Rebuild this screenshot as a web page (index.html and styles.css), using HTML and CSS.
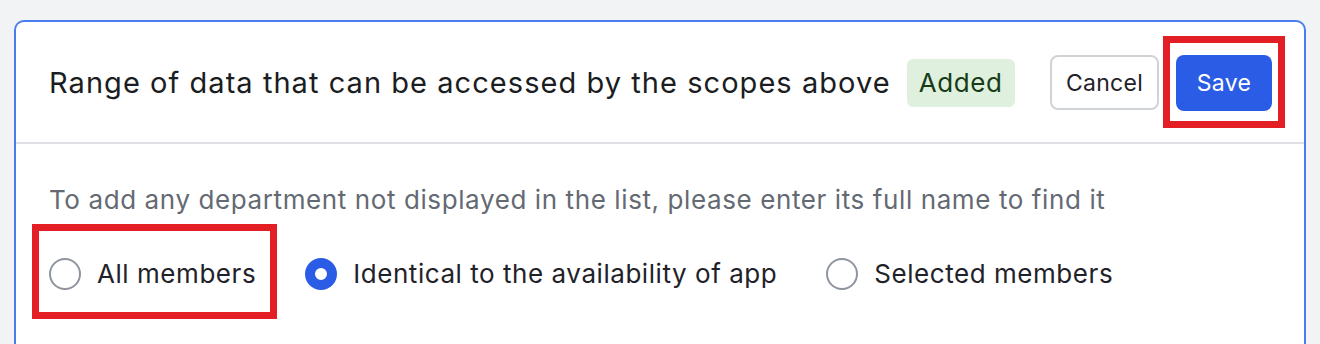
FILE: index.html
```html
<!DOCTYPE html>
<html lang="en">
<head>
<meta charset="utf-8">
<title>Data range</title>
<link rel="stylesheet" href="styles.css">
</head>
<body>
<div class="card">
  <div class="card-header">
    <div class="title-group">
      <h2 class="title">Range of data that can be accessed by the scopes above</h2>
      <span class="badge">Added</span>
    </div>
    <div class="actions">
      <button class="btn btn-default">Cancel</button>
      <button class="btn btn-primary">Save<span class="highlight highlight-save"></span></button>
    </div>
  </div>
  <div class="card-body">
    <p class="hint">To add any department not displayed in the list, please enter its full name to find it</p>
    <div class="radio-group">
      <label class="radio">
        <span class="radio-dot"></span>
        <span class="radio-label">All members</span>
        <span class="highlight highlight-all"></span>
      </label>
      <label class="radio checked">
        <span class="radio-dot"></span>
        <span class="radio-label">Identical to the availability of app</span>
      </label>
      <label class="radio">
        <span class="radio-dot"></span>
        <span class="radio-label">Selected members</span>
      </label>
    </div>
  </div>
</div>
</body>
</html>
```
FILE: styles.css
```css
* { box-sizing: border-box; }
html, body { margin: 0; padding: 0; }
body {
  background: #f2f3f5;
  font-family: Inter, "Noto Sans", sans-serif;
  color: #1f2329;
  width: 1320px;
  height: 344px;
  overflow: hidden;
}
.card {
  margin: 20px 0 0 14px;
  width: 1292px;
  height: 340px;
  background: #fff;
  border: 2px solid #4a7bf0;
  border-bottom: none;
  border-radius: 10px 10px 0 0;
}
.card-header {
  height: 122px;
  display: flex;
  align-items: center;
  justify-content: space-between;
  padding: 1px 32px 0 33px;
  border-bottom: 2px solid #dee0e3;
}
.title-group {
  display: flex;
  align-items: center;
  gap: 16px;
}
.title {
  margin: 0;
  font-size: 29px;
  font-weight: 400;
  color: #1a1d22;
  letter-spacing: 1.05px;
}
.badge {
  display: inline-flex;
  align-items: center;
  justify-content: center;
  width: 108px;
  height: 48px;
  background: #dff1de;
  color: #173b17;
  border-radius: 6px;
  font-size: 26px;
  letter-spacing: 0.6px;
}
.actions {
  display: flex;
  gap: 17px;
  align-items: center;
}
.btn {
  position: relative;
  height: 55px;
  border-radius: 8px;
  font-family: inherit;
  font-size: 23px;
  letter-spacing: 0.3px;
  cursor: pointer;
}
.btn-default {
  width: 109px;
  background: #fff;
  border: 2px solid #d0d3d6;
  color: #1f2329;
}
.btn-primary {
  width: 96px;
  height: 56px;
  background: #2b5ce6;
  border: none;
  color: #fff;
}
.highlight {
  position: absolute;
  border: 7px solid #e31e24;
  pointer-events: none;
}
.highlight-save {
  left: -13px;
  right: -13px;
  top: -19px;
  bottom: -17px;
}
.card-body {
  padding: 38px 33px 0;
}
.hint {
  margin: 0;
  font-size: 26px;
  line-height: 36px;
  color: #646a73;
  letter-spacing: 0.6px;
}
.radio-group {
  display: flex;
  align-items: center;
  gap: 49px;
  margin-top: 40px;
}
.radio {
  position: relative;
  display: flex;
  align-items: center;
  gap: 16px;
  font-size: 26px;
  letter-spacing: 0.6px;
  color: #1f2329;
  line-height: 32px;
}
.radio-dot {
  width: 32px;
  height: 32px;
  border-radius: 50%;
  border: 2px solid #8f959e;
  background: #fff;
  flex: none;
}
.radio.checked .radio-dot {
  border: 10.5px solid #2b5ce6;
}
.radio-label {
  letter-spacing: 0.55px;
}
.highlight-all {
  left: -17px;
  right: -21px;
  top: -34px;
  bottom: -29px;
}
```
